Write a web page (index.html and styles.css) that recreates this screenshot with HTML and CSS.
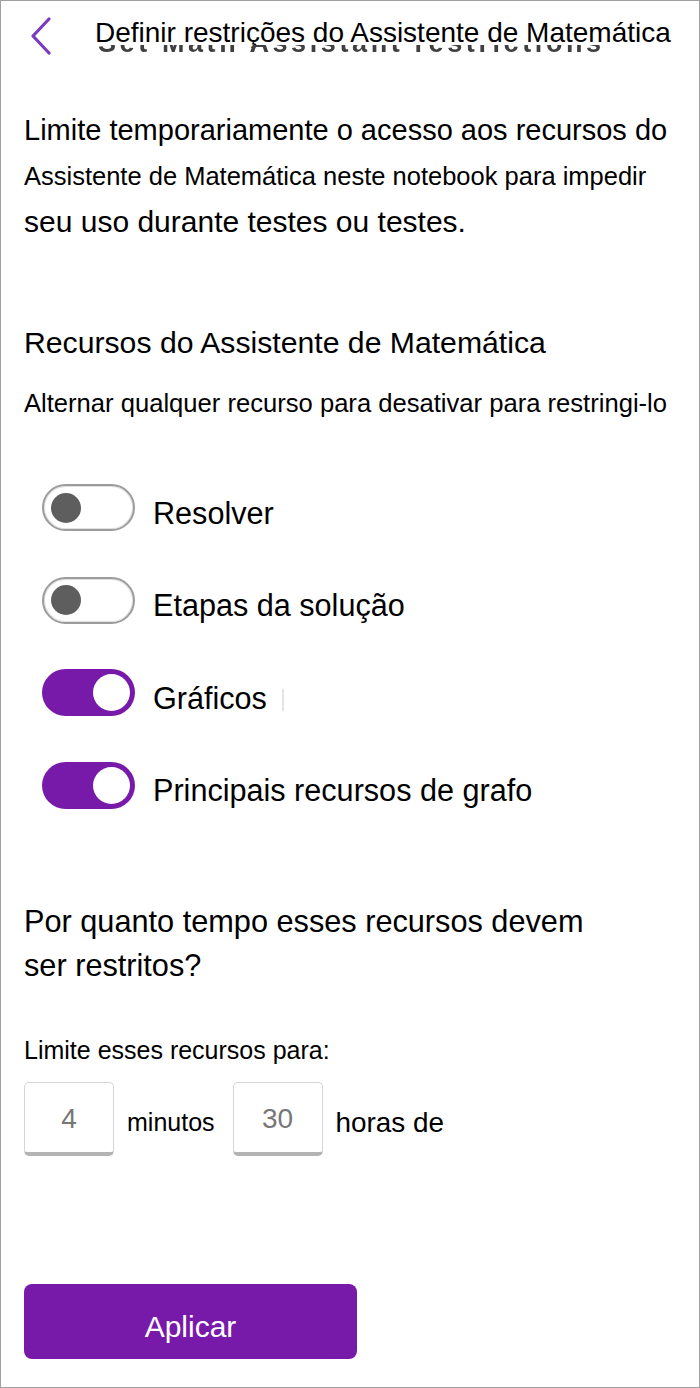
FILE: index.html
```html
<!DOCTYPE html>
<html lang="pt">
<head>
<meta charset="utf-8">
<title>Definir restrições do Assistente de Matemática</title>
<link rel="stylesheet" href="styles.css">
</head>
<body>
<div class="page">
  <header class="header">
    <svg class="back" width="26" height="38" viewBox="0 0 26 38" aria-hidden="true">
      <path d="M21 2 L5 19 L21 36" fill="none" stroke="#7b3bbd" stroke-width="3.2" stroke-linecap="round" stroke-linejoin="round"/>
    </svg>
    <div class="title-wrap">
      <h1 class="title">Definir restrições do Assistente de Matemática</h1>
      <div class="ghost-clip"><span class="ghost">Set Math Assistant restrictions</span></div>
    </div>
  </header>

  <main class="content">
    <p class="intro">
      <span class="intro-l1">Limite temporariamente o acesso aos recursos do</span>
      <span class="intro-l2">Assistente de Matemática neste notebook para impedir</span>
      <span class="intro-l3">seu uso durante testes ou testes.</span>
    </p>

    <h2 class="section-title">Recursos do Assistente de Matemática</h2>
    <p class="section-sub">Alternar qualquer recurso para desativar para restringi-lo</p>

    <ul class="toggles">
      <li class="toggle-row"><span class="toggle off"><span class="knob"></span></span><span class="toggle-label">Resolver</span></li>
      <li class="toggle-row"><span class="toggle off"><span class="knob"></span></span><span class="toggle-label">Etapas da solução</span></li>
      <li class="toggle-row"><span class="toggle on"><span class="knob"></span></span><span class="toggle-label">Gráficos</span><span class="tick"></span></li>
      <li class="toggle-row"><span class="toggle on"><span class="knob"></span></span><span class="toggle-label">Principais recursos de grafo</span></li>
    </ul>

    <h2 class="duration-title">Por quanto tempo esses recursos devem<br>ser restritos?</h2>
    <p class="limit-label">Limite esses recursos para:</p>
    <div class="limit-row">
      <span class="numbox">4</span>
      <span class="unit unit-min">minutos</span>
      <span class="numbox">30</span>
      <span class="unit unit-hr">horas de</span>
    </div>

    <button class="apply" type="button">Aplicar</button>
  </main>
</div>
</body>
</html>
```

FILE: styles.css
```css
* { box-sizing: border-box; }
html, body { margin: 0; padding: 0; background: #ffffff; }
body { font-family: "Liberation Sans", Arial, sans-serif; color: #000; }

.page {
  width: 700px;
  height: 1388px;
  border: 1px solid #a0a0a0;
  background: #fff;
  display: flex;
  flex-direction: column;
}

.header {
  display: flex;
  align-items: flex-start;
  padding: 0 0 0 27px;
  height: 90px;
}
.back { flex: none; margin-top: 16px; }
.title-wrap {
  display: flex;
  flex-direction: column;
  margin-left: 41px;
  padding-top: 19px;
}
.title {
  margin: 0;
  height: 25px;
  font-size: 28px;
  font-weight: normal;
  line-height: 25px;
  white-space: nowrap;
}
.ghost-clip {
  height: 10px;
  overflow: hidden;
}
.ghost {
  display: block;
  margin-top: -15px;
  margin-left: 3px;
  font-size: 27px;
  font-weight: bold;
  line-height: 27px;
  letter-spacing: 3.6px;
  color: #404040;
  white-space: nowrap;
  filter: blur(0.7px);
}

.content {
  padding: 0 0 0 23px;
  display: flex;
  flex-direction: column;
  align-items: flex-start;
}

.intro {
  margin: 16px 0 0;
  line-height: 46px;
}
.intro span { display: block; white-space: nowrap; }
.intro-l1 { font-size: 29px; }
.intro-l2 { font-size: 25.5px; }
.intro-l3 { font-size: 30px; }

.section-title {
  margin: 83px 0 0;
  font-size: 30.2px;
  font-weight: normal;
  line-height: 30px;
  white-space: nowrap;
}
.section-sub {
  margin: 32px 0 0;
  font-size: 25.6px;
  line-height: 26px;
  white-space: nowrap;
}

.toggles {
  list-style: none;
  margin: 68px 0 0;
  padding: 0 0 0 18px;
  display: flex;
  flex-direction: column;
  gap: 45.5px;
}
.toggle-row {
  display: flex;
  align-items: center;
  height: 47px;
}
.toggle {
  flex: none;
  width: 93px;
  height: 47px;
  border-radius: 24px;
  display: flex;
  align-items: center;
}
.toggle.off {
  border: 2px solid #9c9c9c;
  box-shadow: inset 0 0 0 1px #e0e0e0;
  padding-left: 7px;
  background: #fff;
}
.toggle.off .knob {
  width: 30px;
  height: 30px;
  border-radius: 50%;
  background: #5e5e5e;
}
.toggle.on {
  background: #771aaa;
  justify-content: flex-end;
  padding-right: 5px;
}
.toggle.on .knob {
  width: 37px;
  height: 37px;
  border-radius: 50%;
  background: #fff;
}
.toggle-label {
  margin-left: 18px;
  font-size: 30.6px;
  line-height: 30px;
  padding-top: 10px;
  white-space: nowrap;
}
.tick {
  width: 2px;
  height: 22px;
  margin-left: 15px;
  margin-top: 14px;
  background: #e4e4e4;
}

.duration-title {
  margin: 91px 0 0;
  font-size: 30.7px;
  font-weight: normal;
  line-height: 44px;
  white-space: nowrap;
}
.limit-label {
  margin: 50px 0 0;
  font-size: 25px;
  line-height: 24px;
  white-space: nowrap;
}
.limit-row {
  margin-top: 20px;
  display: flex;
  align-items: center;
}
.numbox {
  width: 90px;
  height: 74px;
  border: 1px solid #d4d4d4;
  border-bottom: 4px solid #b4b4b4;
  border-radius: 5px;
  display: flex;
  align-items: center;
  justify-content: center;
  font-size: 28px;
  color: #777;
  padding-top: 4px;
}
.unit {
  margin-top: 8px;
  white-space: nowrap;
}
.unit-min { font-size: 25px; margin-left: 13px; margin-right: 18px; }
.unit-hr { font-size: 27.9px; margin-left: 13px; }

.apply {
  margin-top: 128px;
  width: 333px;
  height: 75px;
  border: none;
  border-radius: 8px;
  background: #771aaa;
  color: #fff;
  font-family: "Liberation Sans", Arial, sans-serif;
  font-size: 30px;
  padding-top: 12px;
}
```
